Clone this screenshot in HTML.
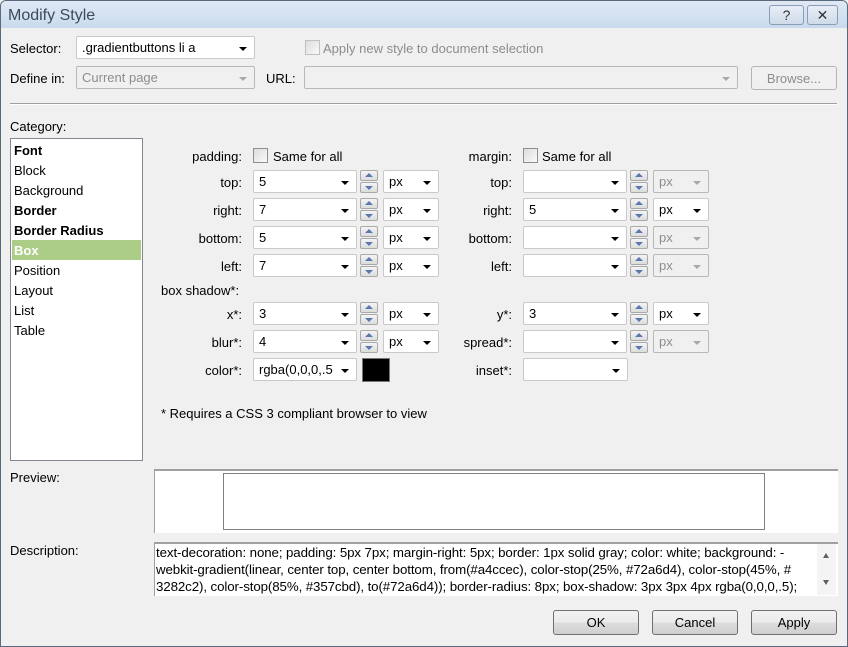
<!DOCTYPE html>
<html><head><meta charset="utf-8"><style>
*{box-sizing:border-box;margin:0;padding:0}
body{width:848px;height:647px;position:relative;overflow:hidden;background:#f0f0f0;font-family:"Liberation Sans","DejaVu Sans",sans-serif;font-size:13px;color:#000}
.a{position:absolute}
.t{position:absolute;white-space:nowrap;line-height:14px}
.r{text-align:right}
.g{color:#8d8d8d}
.cb{position:absolute;background:#fff;border:1px solid #c9c9c9;border-radius:2px;height:23px}
.cb span{position:absolute;left:5px;top:4px;line-height:14px}
.cb i{position:absolute;right:7px;top:10px;width:0;height:0;border-left:4px solid transparent;border-right:4px solid transparent;border-top:4px solid #000}
.cb.d{background:#f0f0f0;border-color:#b8b8b8}
.cb.d i{border-top-color:#a8a8a8}
.cb.d span{color:#8d8d8d}
.sp{position:absolute;width:18px;height:23px}
.sp b{position:absolute;left:0;width:18px;height:11px;background:linear-gradient(#f4f4f4,#dcdcdc);border:1px solid #a9a9a9;border-radius:2px}
.sp b:after{content:"";position:absolute;left:4px;width:0;height:0;border-left:4px solid transparent;border-right:4px solid transparent}
.sp b.u{top:0}.sp b.u:after{top:2px;border-bottom:4px solid #5a78b0}
.sp b.dn{top:12px}.sp b.dn:after{top:3px;border-top:4px solid #5a78b0}
.chk{position:absolute;width:15px;height:15px;border:1px solid #8f8f8f;background:linear-gradient(135deg,#dcdcdc,#fafafa)}
.btn{position:absolute;height:25px;border:1px solid #707070;border-radius:3px;background:linear-gradient(#f2f2f2 0,#ebebeb 50%,#dddddd 51%,#cfcfcf 100%);text-align:center;line-height:23px}
</style></head><body>
<div class="a" style="left:0;top:0;width:848px;height:647px;border:1px solid #5a6a7a;border-radius:6px 6px 0 0"></div>
<div class="a" style="left:1px;top:1px;width:846px;height:27px;background:linear-gradient(#dfe9f5,#c9daee);border-radius:5px 5px 0 0"></div>
<div class="t" style="left:8px;top:7px;font-size:16px;line-height:18px;color:#3c4a5c">Modify Style</div>
<div class="a" style="left:769px;top:5px;width:35px;height:20px;border:1px solid #8a9db5;border-radius:3px;background:linear-gradient(#e8eef6,#cfdbea);text-align:center;font-size:14px;line-height:18px;color:#333">?</div>
<div class="a" style="left:807px;top:5px;width:31px;height:20px;border:1px solid #8a9db5;border-radius:3px;background:linear-gradient(#e8eef6,#cfdbea);text-align:center;font-size:14px;line-height:18px;color:#333">✕</div>

<div class="t" style="left:10px;top:42px">Selector:</div>
<div class="cb" style="left:76px;top:36px;width:179px"><span>.gradientbuttons li a</span><i></i></div>
<div class="chk" style="left:305px;top:40px;border-color:#c0c0c0"></div>
<div class="t g" style="left:323px;top:42px">Apply new style to document selection</div>

<div class="t" style="left:10px;top:72px">Define in:</div>
<div class="cb d" style="left:76px;top:66px;width:179px"><span>Current page</span><i></i></div>
<div class="t" style="left:266px;top:72px">URL:</div>
<div class="cb d" style="left:304px;top:66px;width:434px"><i></i></div>
<div class="btn" style="left:751px;top:66px;width:86px;height:24px;border-color:#b5b5b5;color:#8d8d8d;background:#f0f0f0">Browse...</div>

<div class="a" style="left:10px;top:103px;width:827px;height:1px;background:#a0a0a0"></div>
<div class="a" style="left:10px;top:104px;width:827px;height:1px;background:#fff"></div>

<div class="t" style="left:10px;top:120px">Category:</div>
<div class="a" style="left:10px;top:138px;width:133px;height:323px;background:#fff;border:1px solid #828790"></div>
<div class="a" style="left:12px;top:240px;width:129px;height:20px;background:#abcd87"></div>
<div class="t" style="left:14px;top:144px;font-weight:bold">Font</div>
<div class="t" style="left:14px;top:164px">Block</div>
<div class="t" style="left:14px;top:184px">Background</div>
<div class="t" style="left:14px;top:204px;font-weight:bold">Border</div>
<div class="t" style="left:14px;top:224px;font-weight:bold">Border Radius</div>
<div class="t" style="left:14px;top:244px;font-weight:bold;color:#fff">Box</div>
<div class="t" style="left:14px;top:264px">Position</div>
<div class="t" style="left:14px;top:284px">Layout</div>
<div class="t" style="left:14px;top:304px">List</div>
<div class="t" style="left:14px;top:324px">Table</div>

<div class="t r" style="left:150px;top:150px;width:92px">padding:</div>
<div class="chk" style="left:253px;top:148px"></div>
<div class="t" style="left:273px;top:150px">Same for all</div>

<div class="t r" style="left:150px;top:176px;width:92px">top:</div>
<div class="cb" style="left:253px;top:170px;width:104px"><span>5</span><i></i></div>
<div class="sp" style="left:360px;top:170px"><b class="u"></b><b class="dn"></b></div>
<div class="cb" style="left:383px;top:170px;width:56px"><span>px</span><i></i></div>

<div class="t r" style="left:150px;top:204px;width:92px">right:</div>
<div class="cb" style="left:253px;top:198px;width:104px"><span>7</span><i></i></div>
<div class="sp" style="left:360px;top:198px"><b class="u"></b><b class="dn"></b></div>
<div class="cb" style="left:383px;top:198px;width:56px"><span>px</span><i></i></div>

<div class="t r" style="left:150px;top:232px;width:92px">bottom:</div>
<div class="cb" style="left:253px;top:226px;width:104px"><span>5</span><i></i></div>
<div class="sp" style="left:360px;top:226px"><b class="u"></b><b class="dn"></b></div>
<div class="cb" style="left:383px;top:226px;width:56px"><span>px</span><i></i></div>

<div class="t r" style="left:150px;top:260px;width:92px">left:</div>
<div class="cb" style="left:253px;top:254px;width:104px"><span>7</span><i></i></div>
<div class="sp" style="left:360px;top:254px"><b class="u"></b><b class="dn"></b></div>
<div class="cb" style="left:383px;top:254px;width:56px"><span>px</span><i></i></div>

<div class="t r" style="left:420px;top:150px;width:92px">margin:</div>
<div class="chk" style="left:523px;top:148px"></div>
<div class="t" style="left:542px;top:150px">Same for all</div>

<div class="t r" style="left:420px;top:176px;width:92px">top:</div>
<div class="cb" style="left:523px;top:170px;width:104px"><i></i></div>
<div class="sp" style="left:630px;top:170px"><b class="u"></b><b class="dn"></b></div>
<div class="cb d" style="left:653px;top:170px;width:56px"><span>px</span><i></i></div>

<div class="t r" style="left:420px;top:204px;width:92px">right:</div>
<div class="cb" style="left:523px;top:198px;width:104px"><span>5</span><i></i></div>
<div class="sp" style="left:630px;top:198px"><b class="u"></b><b class="dn"></b></div>
<div class="cb" style="left:653px;top:198px;width:56px"><span>px</span><i></i></div>

<div class="t r" style="left:420px;top:232px;width:92px">bottom:</div>
<div class="cb" style="left:523px;top:226px;width:104px"><i></i></div>
<div class="sp" style="left:630px;top:226px"><b class="u"></b><b class="dn"></b></div>
<div class="cb d" style="left:653px;top:226px;width:56px"><span>px</span><i></i></div>

<div class="t r" style="left:420px;top:260px;width:92px">left:</div>
<div class="cb" style="left:523px;top:254px;width:104px"><i></i></div>
<div class="sp" style="left:630px;top:254px"><b class="u"></b><b class="dn"></b></div>
<div class="cb d" style="left:653px;top:254px;width:56px"><span>px</span><i></i></div>

<div class="t" style="left:161px;top:284px">box shadow*:</div>

<div class="t r" style="left:150px;top:308px;width:92px">x*:</div>
<div class="cb" style="left:253px;top:302px;width:104px"><span>3</span><i></i></div>
<div class="sp" style="left:360px;top:302px"><b class="u"></b><b class="dn"></b></div>
<div class="cb" style="left:383px;top:302px;width:56px"><span>px</span><i></i></div>

<div class="t r" style="left:150px;top:336px;width:92px">blur*:</div>
<div class="cb" style="left:253px;top:330px;width:104px"><span>4</span><i></i></div>
<div class="sp" style="left:360px;top:330px"><b class="u"></b><b class="dn"></b></div>
<div class="cb" style="left:383px;top:330px;width:56px"><span>px</span><i></i></div>

<div class="t r" style="left:150px;top:364px;width:92px">color*:</div>
<div class="cb" style="left:253px;top:358px;width:104px"><span>rgba(0,0,0,.5</span><i></i></div>
<div class="a" style="left:362px;top:358px;width:28px;height:24px;background:#000;border:1px solid #777"></div>

<div class="t r" style="left:420px;top:308px;width:92px">y*:</div>
<div class="cb" style="left:523px;top:302px;width:104px"><span>3</span><i></i></div>
<div class="sp" style="left:630px;top:302px"><b class="u"></b><b class="dn"></b></div>
<div class="cb" style="left:653px;top:302px;width:56px"><span>px</span><i></i></div>

<div class="t r" style="left:420px;top:336px;width:92px">spread*:</div>
<div class="cb" style="left:523px;top:330px;width:104px"><i></i></div>
<div class="sp" style="left:630px;top:330px"><b class="u"></b><b class="dn"></b></div>
<div class="cb d" style="left:653px;top:330px;width:56px"><span>px</span><i></i></div>

<div class="t r" style="left:420px;top:364px;width:92px">inset*:</div>
<div class="cb" style="left:523px;top:358px;width:105px"><i></i></div>

<div class="t" style="left:161px;top:407px">* Requires a CSS 3 compliant browser to view</div>

<div class="t" style="left:10px;top:471px">Preview:</div>
<div class="a" style="left:154px;top:469px;width:684px;height:64px;background:#fff;border-top:2px solid #a0a0a0;border-left:1px solid #a0a0a0"></div>
<div class="a" style="left:223px;top:473px;width:542px;height:57px;border:1px solid #808080;background:#fff"></div>

<div class="t" style="left:10px;top:544px">Description:</div>
<div class="a" style="left:154px;top:542px;width:684px;height:54px;background:#fff;border-top:2px solid #a0a0a0;border-left:1px solid #a0a0a0"></div>
<div class="a" style="left:156px;top:544px;width:660px;height:51px;overflow:hidden;font-size:13.3px;line-height:17px;letter-spacing:-0.1px;white-space:nowrap">text-decoration: none; padding: 5px 7px; margin-right: 5px; border: 1px solid gray; color: white; background: -<br>webkit-gradient(linear, center top, center bottom, from(#a4ccec), color-stop(25%, #72a6d4), color-stop(45%, #<br>3282c2), color-stop(85%, #357cbd), to(#72a6d4)); border-radius: 8px; box-shadow: 3px 3px 4px rgba(0,0,0,.5);</div>
<div class="a" style="left:817px;top:544px;width:19px;height:51px;background:#f4f4f4"></div>
<div class="a" style="left:823px;top:553px;border-left:3.5px solid transparent;border-right:3.5px solid transparent;border-bottom:5px solid #606060"></div>
<div class="a" style="left:823px;top:580px;border-left:3.5px solid transparent;border-right:3.5px solid transparent;border-top:5px solid #606060"></div>

<div class="btn" style="left:553px;top:610px;width:86px">OK</div>
<div class="btn" style="left:652px;top:610px;width:86px">Cancel</div>
<div class="btn" style="left:751px;top:610px;width:86px">Apply</div>
</body></html>
